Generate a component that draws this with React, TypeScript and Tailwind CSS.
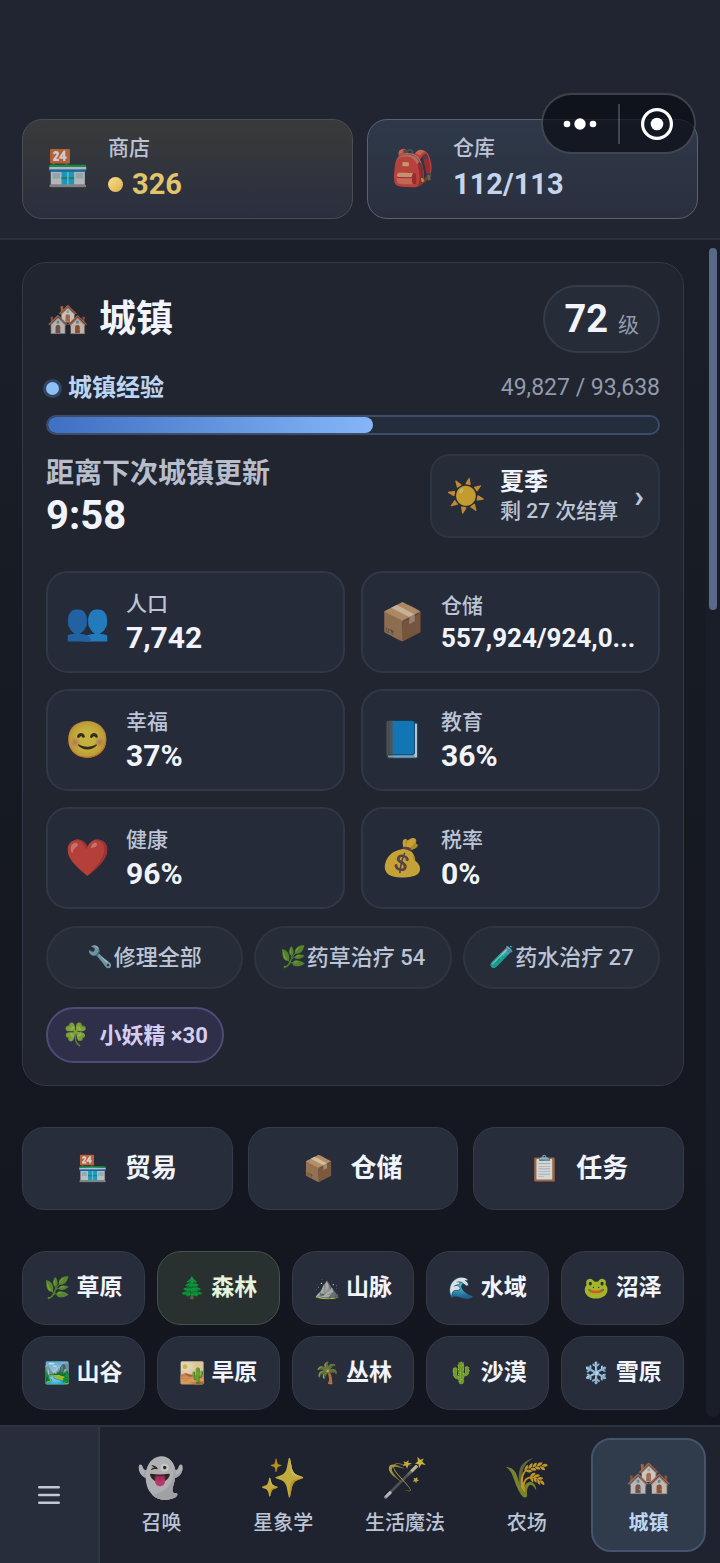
/**
 * Town overview screen: resources, town stats, quick actions and biomes.
 */

interface Stat {
  icon: string;
  label: string;
  value: string;
  long?: boolean;
}

interface Item {
  icon: string;
  label: string;
  active?: boolean;
}

const stats: Stat[] = [
  { icon: "👥", label: "人口", value: "7,742" },
  { icon: "📦", label: "仓储", value: "557,924/924,0...", long: true },
  { icon: "😊", label: "幸福", value: "37%" },
  { icon: "📘", label: "教育", value: "36%" },
  { icon: "❤️", label: "健康", value: "96%" },
  { icon: "💰", label: "税率", value: "0%" },
];

const actions: Item[] = [
  { icon: "🔧", label: "修理全部" },
  { icon: "🌿", label: "药草治疗 54" },
  { icon: "🧪", label: "药水治疗 27" },
];

const shortcuts: Item[] = [
  { icon: "🏪", label: "贸易" },
  { icon: "📦", label: "仓储" },
  { icon: "📋", label: "任务" },
];

const biomes: Item[] = [
  { icon: "🌿", label: "草原" },
  { icon: "🌲", label: "森林", active: true },
  { icon: "⛰️", label: "山脉" },
  { icon: "🌊", label: "水域" },
  { icon: "🐸", label: "沼泽" },
  { icon: "🏞️", label: "山谷" },
  { icon: "🏜️", label: "旱原" },
  { icon: "🌴", label: "丛林" },
  { icon: "🌵", label: "沙漠" },
  { icon: "❄️", label: "雪原" },
];

const tabs: Item[] = [
  { icon: "👻", label: "召唤" },
  { icon: "✨", label: "星象学" },
  { icon: "🪄", label: "生活魔法" },
  { icon: "🌾", label: "农场" },
  { icon: "🏘️", label: "城镇", active: true },
];

const exp = { current: 49827, total: 93638 };

function Emoji({ children, className }: { children: string; className: string }) {
  return (
    <span
      aria-hidden="true"
      className={`shrink-0 text-center font-['Noto_Color_Emoji'] font-normal leading-none saturate-90 ${className}`}
    >
      {children}
    </span>
  );
}

function Capsule() {
  return (
    <div className="absolute right-6 top-[93px] flex h-[61px] w-[155px] items-center rounded-full border-2 border-white/20 bg-[#080b12]/70">
      <button aria-label="更多" className="flex h-full flex-1 items-center justify-center">
        <svg className="h-3 w-9" viewBox="0 0 36 12" fill="#fff">
          <circle cx="5" cy="6" r="3.3" />
          <circle cx="18" cy="6" r="5.7" />
          <circle cx="31" cy="6" r="3.3" />
        </svg>
      </button>
      <div className="h-10 w-[2px] bg-white/20" />
      <button aria-label="关闭" className="flex h-full flex-1 items-center justify-center">
        <svg className="h-8 w-8" viewBox="0 0 32 32" fill="none">
          <circle cx="16" cy="16" r="14.4" stroke="#fff" strokeWidth="3.2" />
          <circle cx="16" cy="16" r="6.3" fill="#fff" />
        </svg>
      </button>
    </div>
  );
}

function Header() {
  return (
    <header className="relative grid grid-cols-2 gap-[14px] border-b-2 border-[#2b303c] bg-[#202531] px-[22px] pb-[19px] pt-[119px]">
      <button className="flex h-[100px] items-center gap-[22px] rounded-[20px] border border-[#4b4d52] bg-linear-to-b from-[#393a3a] to-[#2a2f3e] px-[23px] pb-[2px] text-left">
        <Emoji className="w-10 text-[35px] opacity-75">🏪</Emoji>
        <span>
          <span className="block text-[21px] font-medium leading-8 text-[#bcc4d6]">商店</span>
          <span className="flex items-center gap-[9px] text-[29px] font-bold leading-10 text-[#e2c46d]">
            <span className="h-[15px] w-[15px] rounded-full bg-linear-to-br from-[#f8e08a] to-[#dcb04a]" />
            326
          </span>
        </span>
      </button>
      <button className="flex h-[100px] items-center gap-[22px] rounded-[20px] border border-[#596172] bg-linear-to-b from-[#2f394a] to-[#2a2f3e] px-[23px] pb-[2px] text-left">
        <Emoji className="w-10 text-[35px] opacity-75">🎒</Emoji>
        <span>
          <span className="block text-[21px] font-medium leading-8 text-[#bcc4d6]">仓库</span>
          <span className="block text-[29px] font-bold leading-10 text-[#c5d4ec]">112/113</span>
        </span>
      </button>
      <Capsule />
    </header>
  );
}

function TownCard() {
  const percent = (exp.current / exp.total) * 100;

  return (
    <section className="rounded-3xl border border-[#333845] bg-[#202530] px-[23px] py-[22px]">
      <div className="flex h-[68px] items-center justify-between">
        <h1 className="flex items-center gap-3 text-[37px] font-bold leading-none text-[#f1f4fc]">
          <Emoji className="w-[41px] text-[35px] opacity-75">🏘️</Emoji>
          城镇
        </h1>
        <div className="flex h-full items-center rounded-full border-2 border-[#343b49] bg-[#262d39] px-[19px] leading-none">
          <div className="flex items-baseline gap-[10px]">
            <span className="text-[38px] font-bold text-[#f1f4fc]">72</span>
            <span className="text-[21px] text-[#939aab]">级</span>
          </div>
        </div>
      </div>

      {/* Experience */}
      <div className="mt-[17px] flex h-9 items-center justify-between">
        <span className="flex items-center gap-[9px] text-2xl font-bold text-[#bdd5f3]">
          <span className="h-[13px] w-[13px] rounded-full bg-[#8ec0f5] ring-3 ring-[#2f4763]" />
          城镇经验
        </span>
        <span className="text-[23px] text-[#939aab]">
          {exp.current.toLocaleString("en-US")} / {exp.total.toLocaleString("en-US")}
        </span>
      </div>
      <div className="mt-[9px] h-5 overflow-hidden rounded-full border-2 border-[#3c4c69] bg-[#242d3c]">
        <div
          className="h-full rounded-full bg-linear-to-r from-[#3f6fc2] to-[#86b6f8]"
          style={{ width: `${percent}%` }}
        />
      </div>

      <div className="mt-[19px] flex items-center justify-between">
        <div>
          <p className="text-[28px] font-bold leading-10 text-[#b7bdcb]">距离下次城镇更新</p>
          <p className="text-[40px] font-bold leading-11 text-[#f1f4fc]">9:58</p>
        </div>
        <button className="flex h-[84px] w-[230px] items-center rounded-[20px] border-2 border-[#2e3542] bg-[#262d39] px-[14px] text-left">
          <Emoji className="w-10 text-[32px] opacity-75">☀️</Emoji>
          <span className="ml-[14px] flex-1 whitespace-nowrap">
            <span className="block text-2xl font-bold leading-[30px] text-[#f1f4fc]">夏季</span>
            <span className="block text-[21px] font-medium leading-7 text-[#bcc4d6]">剩 27 次结算</span>
          </span>
          <span className="text-[32px] font-bold leading-none text-[#bcc4d6]">›</span>
        </button>
      </div>

      {/* Stats */}
      <div className="mt-[33px] grid grid-cols-2 gap-4">
        {stats.map((stat) => (
          <div
            key={stat.label}
            className="flex h-[102px] items-center gap-[18px] rounded-[22px] border-2 border-[#303847] bg-[#252b38] pl-[17px] pr-3"
          >
            <Emoji className="w-[43px] text-[36px] opacity-75">{stat.icon}</Emoji>
            <div className="min-w-0 flex-1">
              <p className="text-[21px] font-medium leading-8 text-[#bcc4d6]">{stat.label}</p>
              <p
                className={`whitespace-nowrap font-bold text-[#f1f4fc] ${
                  stat.long ? "text-[26px] leading-8" : "text-[30px] leading-9"
                }`}
              >
                {stat.value}
              </p>
            </div>
          </div>
        ))}
      </div>

      {/* Actions */}
      <div className="mt-[17px] grid grid-cols-3 gap-[11px]">
        {actions.map((action) => (
          <button
            key={action.label}
            className="flex h-[63px] items-center justify-center whitespace-nowrap rounded-full border-2 border-[#2e3541] bg-[#262d39] text-[22px] font-medium text-[#bcc4d6]"
          >
            <Emoji className="text-[21px] opacity-80">{action.icon}</Emoji>
            {action.label}
          </button>
        ))}
      </div>
      <button className="mt-[18px] flex h-14 items-center gap-[10px] rounded-full border-2 border-[#4e4b76] bg-[#302f49] px-[14px] text-[22px] font-bold text-[#d5cdf0]">
        <Emoji className="text-[22px] opacity-80">🍀</Emoji>
        小妖精 ×30
      </button>
    </section>
  );
}

function ShortcutButtons() {
  return (
    <div className="mt-[41px] grid grid-cols-3 gap-[15px]">
      {shortcuts.map((item) => (
        <button
          key={item.label}
          className="flex h-[83px] items-center justify-center gap-4 rounded-[22px] border border-[#353b48] bg-[#272d3a] text-[26px] font-bold text-[#f1f4fc]"
        >
          <Emoji className="text-[25px] opacity-80">{item.icon}</Emoji>
          {item.label}
        </button>
      ))}
    </div>
  );
}

function BiomeGrid() {
  return (
    <div className="mt-[41px] grid grid-cols-5 gap-x-3 gap-y-[11px]">
      {biomes.map((biome) => (
        <button
          key={biome.label}
          aria-pressed={!!biome.active}
          className={`flex h-[74px] items-center justify-center gap-[6px] rounded-3xl border text-[23px] font-bold ${
            biome.active
              ? "border-[#435347] bg-[#28312f] text-[#e3f3dc]"
              : "border-[#353b48] bg-[#272d3a] text-[#f1f4fc]"
          }`}
        >
          <Emoji className="text-[21px] opacity-85">{biome.icon}</Emoji>
          {biome.label}
        </button>
      ))}
    </div>
  );
}

function BottomNav() {
  return (
    <nav className="flex h-[138px] border-t-2 border-[#2c323e] bg-[#1e232f]">
      <button
        aria-label="菜单"
        className="flex w-[100px] shrink-0 items-center justify-center border-r-2 border-[#303642] bg-[#272d3a]"
      >
        <svg
          className="h-5 w-[22px]"
          viewBox="0 0 22 20"
          stroke="#c3c8d4"
          strokeWidth={2.4}
          strokeLinecap="round"
        >
          <path d="M1.2 2.2h19.6M1.2 10h19.6M1.2 17.8h19.6" />
        </svg>
      </button>
      <div className="grid flex-1 grid-cols-5 gap-[7px] py-[11px] pl-1 pr-[14px]">
        {tabs.map((tab) => (
          <a
            key={tab.label}
            href="#"
            className={`flex flex-col items-center justify-center gap-3 whitespace-nowrap rounded-[20px] border-2 pt-[6px] text-xl ${
              tab.active
                ? "border-[#43546c] bg-[#303c4b] font-bold text-[#bdd5f3]"
                : "border-transparent font-medium text-[#bcc4d6]"
            }`}
          >
            <Emoji className="text-[38px] opacity-75">{tab.icon}</Emoji>
            {tab.label}
          </a>
        ))}
      </div>
    </nav>
  );
}

export default function App() {
  return (
    <div className="flex min-h-screen flex-col bg-[#14171f] font-[Roboto,'Noto_Sans_CJK_SC',sans-serif]">
      <Header />
      <div className="flex flex-1 bg-linear-to-b from-[#1b1f2a] via-[#151920] to-[#14161f]">
        <main className="min-w-0 flex-1 px-[22px] pb-[15px] pt-[22px]">
          <TownCard />
          <ShortcutButtons />
          <BiomeGrid />
        </main>
        {/* Scrollbar */}
        <div className="my-2 w-[14px] rounded-full bg-[#1a1e28] px-[3px]">
          <div className="h-[31%] rounded-full bg-[#586a87]" />
        </div>
      </div>
      <BottomNav />
    </div>
  );
}
